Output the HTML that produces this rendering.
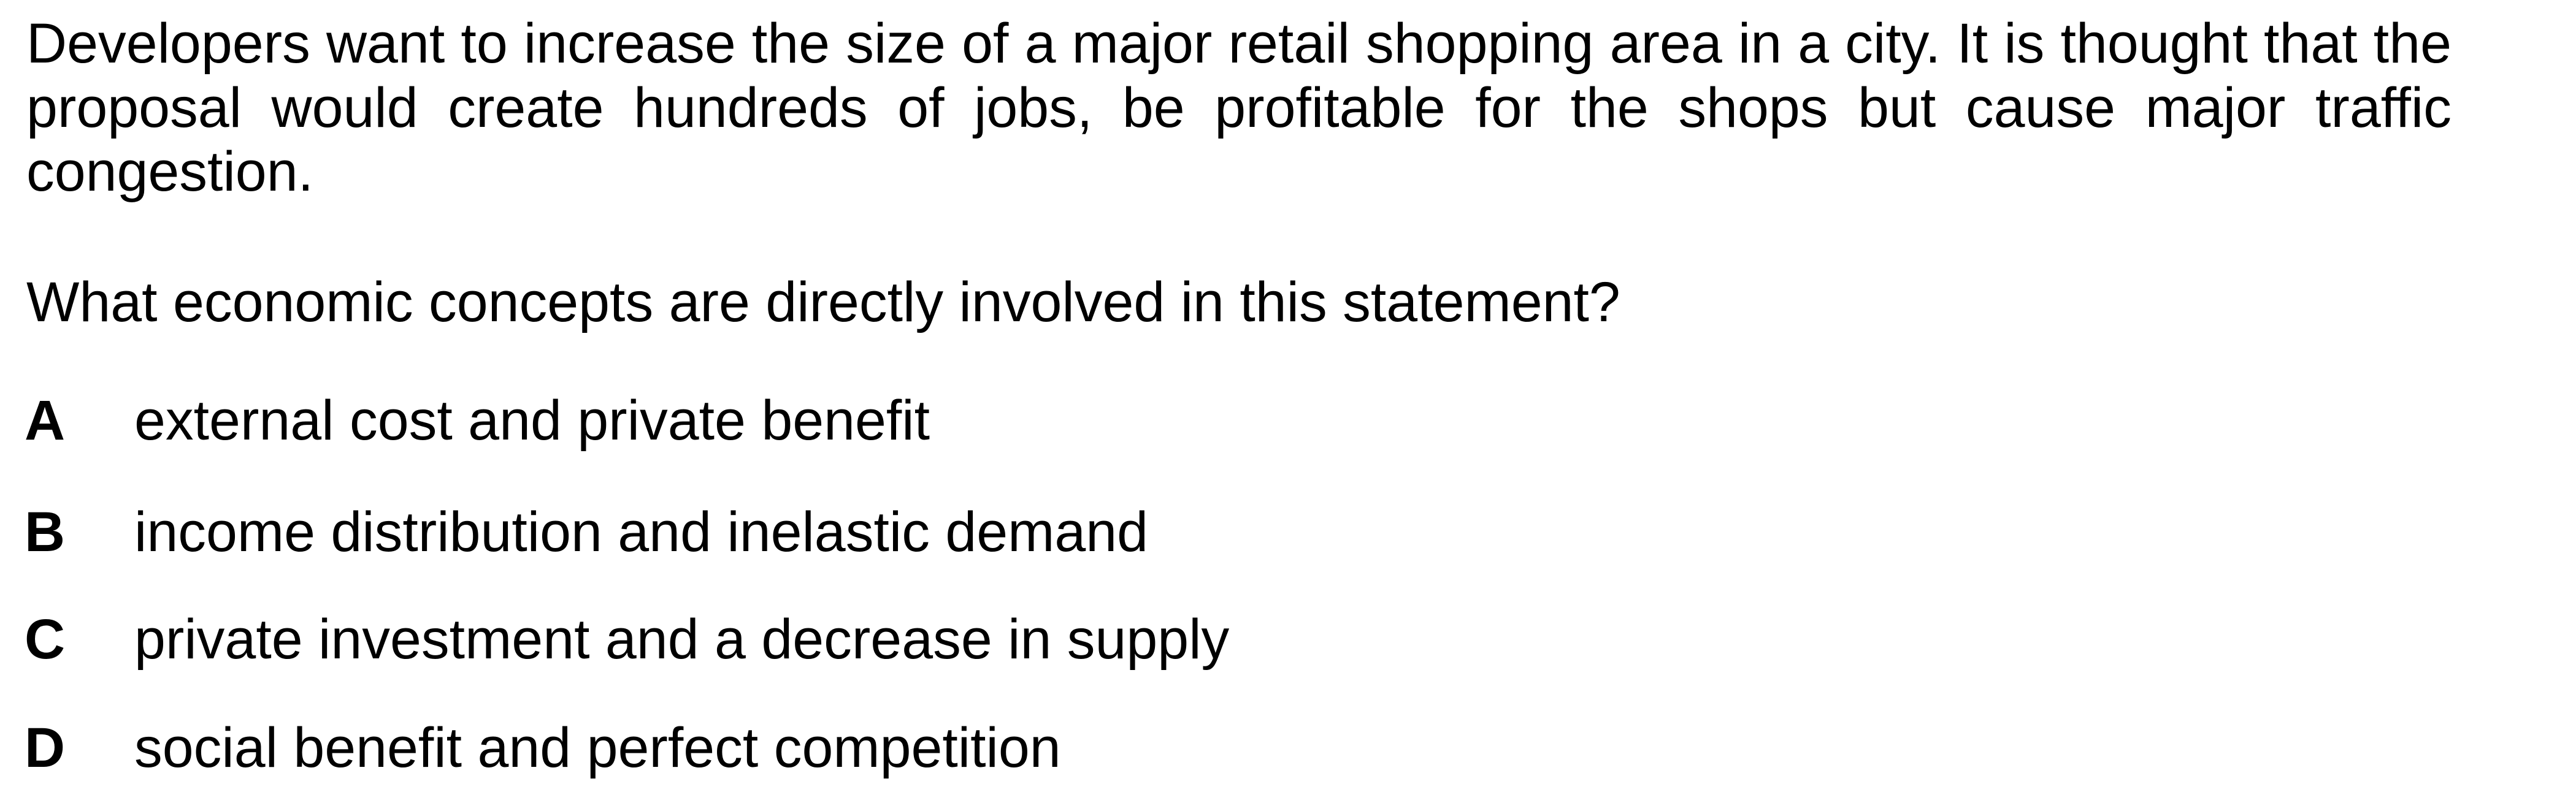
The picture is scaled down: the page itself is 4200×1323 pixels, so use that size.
<!DOCTYPE html>
<html><head><meta charset="utf-8"><style>
html,body{margin:0;padding:0;background:#fff;}
body{width:4200px;height:1323px;position:relative;overflow:hidden;font-family:"Liberation Sans",Arial,sans-serif;font-size:91.5px;color:#000;}
.l{position:absolute;left:43px;white-space:nowrap;line-height:1;}
.j{width:3954px;text-align:justify;text-align-last:justify;white-space:normal;}
.k{position:absolute;left:40px;font-weight:bold;line-height:1;}
.o{position:absolute;left:219px;line-height:1;white-space:nowrap;}
</style></head><body>
<div class="l j" style="top:26px">Developers want to increase the size of a major retail shopping area in a city. It is thought that the</div>
<div class="l j" style="top:131px">proposal would create hundreds of jobs, be profitable for the shops but cause major traffic</div>
<div class="l" style="top:235px">congestion.</div>
<div class="l" style="top:448px">What economic concepts are directly involved in this statement?</div>
<div class="k" style="top:641px">A</div><div class="o" style="top:641px">external cost and private benefit</div>
<div class="k" style="top:823px">B</div><div class="o" style="top:823px">income distribution and inelastic demand</div>
<div class="k" style="top:998px">C</div><div class="o" style="top:998px">private investment and a decrease in supply</div>
<div class="k" style="top:1175px">D</div><div class="o" style="top:1175px">social benefit and perfect competition</div>
</body></html>
